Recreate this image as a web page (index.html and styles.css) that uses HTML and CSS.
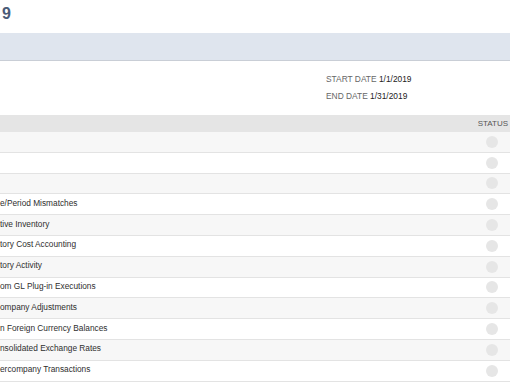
FILE: index.html
```html
<!DOCTYPE html>
<html lang="en">
<head>
    <meta charset="UTF-8">
    <meta name="viewport" content="width=device-width, initial-scale=1.0">
    <title>Period Close Checklist</title>
    <link rel="stylesheet" href="styles.css">
</head>
<body>
    <div class="page">
        <div class="page-title">9</div>
        <div class="title-band"></div>
        <div class="period-info">
            <div class="info-left"></div>
            <div class="info-right">
                <div class="info-line"><span class="info-label">START DATE</span> <span class="info-value">1/1/2019</span></div>
                <div class="info-line"><span class="info-label">END DATE</span> <span class="info-value">1/31/2019</span></div>
            </div>
        </div>
        <div class="task-list">
            <div class="task-header">
                <span class="task-name"></span>
                <span class="task-status-head">STATUS</span>
            </div>
            <div class="task-row"><span class="task-name"></span><span class="task-status"><span class="status-dot"></span></span></div>
            <div class="task-row"><span class="task-name"></span><span class="task-status"><span class="status-dot"></span></span></div>
            <div class="task-row"><span class="task-name"></span><span class="task-status"><span class="status-dot"></span></span></div>
            <div class="task-row"><span class="task-name">e/Period Mismatches</span><span class="task-status"><span class="status-dot"></span></span></div>
            <div class="task-row"><span class="task-name">tive Inventory</span><span class="task-status"><span class="status-dot"></span></span></div>
            <div class="task-row"><span class="task-name">tory Cost Accounting</span><span class="task-status"><span class="status-dot"></span></span></div>
            <div class="task-row"><span class="task-name">tory Activity</span><span class="task-status"><span class="status-dot"></span></span></div>
            <div class="task-row"><span class="task-name">om GL Plug-in Executions</span><span class="task-status"><span class="status-dot"></span></span></div>
            <div class="task-row"><span class="task-name">ompany Adjustments</span><span class="task-status"><span class="status-dot"></span></span></div>
            <div class="task-row"><span class="task-name">n Foreign Currency Balances</span><span class="task-status"><span class="status-dot"></span></span></div>
            <div class="task-row"><span class="task-name">nsolidated Exchange Rates</span><span class="task-status"><span class="status-dot"></span></span></div>
            <div class="task-row"><span class="task-name">ercompany Transactions</span><span class="task-status"><span class="status-dot"></span></span></div>
        </div>
    </div>
</body>
</html>
```

FILE: styles.css
```css
body {
    font-family: 'Liberation Sans', Arial, sans-serif;
    margin: 0;
    background-color: #fff;
    color: #333;
    overflow: hidden;
}
.page {
    width: 510px;
}
.page-title {
    box-sizing: border-box;
    height: 33px;
    padding-top: 6px;
    padding-left: 2px;
    font-size: 16px;
    line-height: 16px;
    font-weight: bold;
    color: #4a5b78;
}
.title-band {
    height: 27px;
    background-color: #dfe5ee;
    border-bottom: 1px solid #c9ced6;
}
.period-info {
    display: flex;
    box-sizing: border-box;
    height: 54px;
    padding-top: 10px;
}
.info-left {
    width: 326px;
}
.info-line {
    font-size: 8.4px;
    line-height: 17px;
    white-space: nowrap;
}
.info-label {
    color: #666;
}
.info-value {
    color: #222;
}
.task-header {
    display: flex;
    align-items: center;
    height: 17px;
    background-color: #e5e5e5;
    font-size: 8px;
    color: #555;
}
.task-row {
    display: flex;
    align-items: center;
    box-sizing: border-box;
    height: 20.8px;
    border-bottom: 1px solid #e3e3e3;
    font-size: 8.3px;
    color: #2e2e2e;
}
.task-row:nth-child(even) {
    background-color: #f7f7f7;
}
.task-name {
    flex: 1;
    padding-bottom: 3px;
    white-space: nowrap;
}
.task-status-head {
    padding-right: 2px;
}
.task-status {
    display: flex;
    justify-content: flex-end;
    padding-right: 12px;
}
.status-dot {
    width: 12px;
    height: 12px;
    border-radius: 50%;
    background-color: #e6e6e6;
}
```
